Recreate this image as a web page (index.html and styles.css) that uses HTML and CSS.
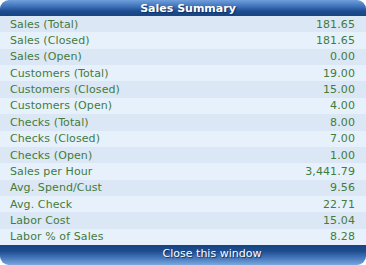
FILE: index.html
```html
<!DOCTYPE html>
<html>
<head>
<meta charset="utf-8">
<link rel="stylesheet" href="styles.css">
</head>
<body>
<div class="panel">
  <div class="head">Sales Summary</div>
  <div class="rows">
    <div class="row"><span>Sales (Total)</span><span>181.65</span></div>
    <div class="row"><span>Sales (Closed)</span><span>181.65</span></div>
    <div class="row"><span>Sales (Open)</span><span>0.00</span></div>
    <div class="row"><span>Customers (Total)</span><span>19.00</span></div>
    <div class="row"><span>Customers (Closed)</span><span>15.00</span></div>
    <div class="row"><span>Customers (Open)</span><span>4.00</span></div>
    <div class="row"><span>Checks (Total)</span><span>8.00</span></div>
    <div class="row"><span>Checks (Closed)</span><span>7.00</span></div>
    <div class="row"><span>Checks (Open)</span><span>1.00</span></div>
    <div class="row"><span>Sales per Hour</span><span>3,441.79</span></div>
    <div class="row"><span>Avg. Spend/Cust</span><span>9.56</span></div>
    <div class="row"><span>Avg. Check</span><span>22.71</span></div>
    <div class="row"><span>Labor Cost</span><span>15.04</span></div>
    <div class="row"><span>Labor % of Sales</span><span>8.28</span></div>
  </div>
  <div class="foot">Close this window</div>
</div>
</body>
</html>
```

FILE: styles.css
```css
html, body {
  margin: 0;
  padding: 0;
  background: #ffffff;
}
.panel {
  width: 366px;
  height: 265px;
  display: flex;
  flex-direction: column;
  font-family: "DejaVu Sans", Verdana, sans-serif;
  font-size: 11px;
  border-radius: 9px;
  overflow: hidden;
  background: #e6f0fa;
}
.head {
  height: 16px;
  flex: none;
  display: flex;
  align-items: center;
  justify-content: center;
  padding-left: 10px;
  color: #ffffff;
  font-weight: bold;
  text-shadow: 1px 1px 1px #0c2f63;
  background: linear-gradient(to bottom, #6f9fdc 0%, #3a6cb4 45%, #1d4c8e 70%, #174482 100%);
}
.rows {
  height: 229px;
  flex: none;
  display: grid;
  grid-auto-rows: 1fr;
}
.row {
  display: flex;
  justify-content: space-between;
  align-items: center;
  padding: 0 11px 0 10px;
  color: #437b3c;
  letter-spacing: 0.1px;
}
.row:nth-child(odd) {
  background: #dbe7f4;
}
.row:nth-child(even) {
  background: #e7f1fc;
}
.foot {
  flex: 1;
  display: flex;
  align-items: flex-start;
  justify-content: center;
  padding-top: 2px;
  padding-left: 58px;
  color: #ffffff;
  text-shadow: 1px 1px 1px #0c2f63;
  background: linear-gradient(to bottom, #174482 0%, #1d4c8e 30%, #3f70b6 60%, #7aa7dd 100%);
}
```
